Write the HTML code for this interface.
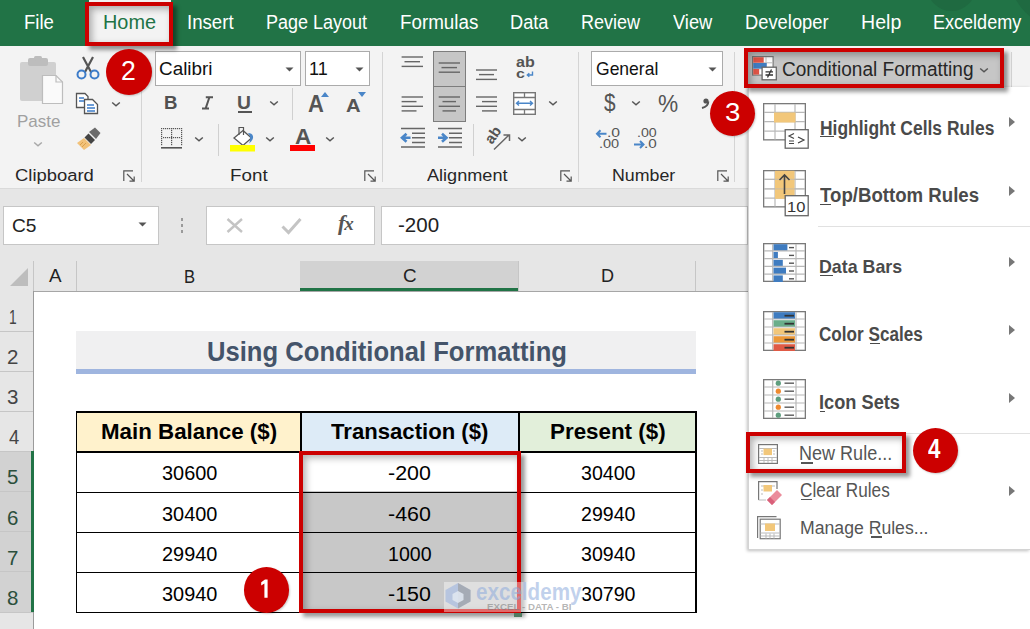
<!DOCTYPE html>
<html><head><meta charset="utf-8"><style>
html,body{margin:0;padding:0;}
body{width:1030px;height:629px;position:relative;overflow:hidden;font-family:"Liberation Sans",sans-serif;background:#fff;}
.t{position:absolute;white-space:nowrap;transform-origin:0 0;}
.r{position:absolute;}
</style></head><body>
<div class="r" style="left:0px;top:0px;width:1030px;height:46px;background:#217346"></div>
<div class="r" style="left:926.5px;top:-38px;width:49px;height:49px;border-radius:50%;background:#1f6a41"></div>
<div class="r" style="left:1008px;top:-90px;width:120px;height:120px;border-radius:50%;background:#1f6a41"></div>
<div class="r" style="left:0px;top:46px;width:1030px;height:143px;background:#f3f3f3"></div>
<div class="r" style="left:0px;top:188px;width:1030px;height:1px;background:#dadada"></div>
<div class="r" style="left:0px;top:189px;width:1030px;height:72px;background:#e6e6e6"></div>
<div class="r" style="left:0px;top:261px;width:1030px;height:30px;background:#e6e6e6"></div>
<div class="r" style="left:0px;top:291px;width:1030px;height:338px;background:#fff"></div>
<div class="t" style="left:24.14px;top:12.30px;font-size:20.00px;line-height:20.00px;font-weight:normal;color:#fff;transform:scaleX(0.9276);">File</div>
<div class="t" style="left:186.94px;top:12.30px;font-size:20.00px;line-height:20.00px;font-weight:normal;color:#fff;transform:scaleX(0.9319);">Insert</div>
<div class="t" style="left:266.20px;top:12.30px;font-size:20.00px;line-height:20.00px;font-weight:normal;color:#fff;transform:scaleX(0.9000);">Page Layout</div>
<div class="t" style="left:399.82px;top:12.30px;font-size:20.00px;line-height:20.00px;font-weight:normal;color:#fff;transform:scaleX(0.9400);">Formulas</div>
<div class="t" style="left:509.68px;top:12.30px;font-size:20.00px;line-height:20.00px;font-weight:normal;color:#fff;transform:scaleX(0.9100);">Data</div>
<div class="t" style="left:580.70px;top:12.30px;font-size:20.00px;line-height:20.00px;font-weight:normal;color:#fff;transform:scaleX(0.9000);">Review</div>
<div class="t" style="left:672.70px;top:12.30px;font-size:20.00px;line-height:20.00px;font-weight:normal;color:#fff;transform:scaleX(0.9140);">View</div>
<div class="t" style="left:744.57px;top:12.30px;font-size:20.00px;line-height:20.00px;font-weight:normal;color:#fff;transform:scaleX(0.9169);">Developer</div>
<div class="t" style="left:860.84px;top:12.30px;font-size:20.00px;line-height:20.00px;font-weight:normal;color:#fff;transform:scaleX(0.9789);">Help</div>
<div class="t" style="left:933.40px;top:12.30px;font-size:20.00px;line-height:20.00px;font-weight:normal;color:#fff;transform:scaleX(0.9021);">Exceldemy</div>
<div class="r" style="left:89px;top:0px;width:82px;height:46px;background:#f3f3f3"></div>
<div class="t" style="left:102.81px;top:12.30px;font-size:20.00px;line-height:20.00px;font-weight:normal;color:#217346;transform:scaleX(0.9940);">Home</div>
<div class="t" style="left:15.42px;top:167.46px;font-size:17.10px;line-height:17.10px;font-weight:normal;color:#262626;transform:scaleX(1.0775);">Clipboard</div>
<div class="t" style="left:229.60px;top:167.46px;font-size:17.10px;line-height:17.10px;font-weight:normal;color:#262626;transform:scaleX(1.1000);">Font</div>
<div class="t" style="left:426.50px;top:167.46px;font-size:17.10px;line-height:17.10px;font-weight:normal;color:#262626;transform:scaleX(1.0592);">Alignment</div>
<div class="t" style="left:611.56px;top:167.46px;font-size:17.10px;line-height:17.10px;font-weight:normal;color:#262626;transform:scaleX(1.0407);">Number</div>
<div class="r" style="left:141px;top:52px;width:1px;height:130px;background:#d4d4d4"></div>
<div class="r" style="left:382px;top:52px;width:1px;height:130px;background:#d4d4d4"></div>
<div class="r" style="left:578.3px;top:52px;width:1px;height:130px;background:#d4d4d4"></div>
<div class="r" style="left:734.3px;top:52px;width:1px;height:130px;background:#d4d4d4"></div>
<svg class="r" style="left:123px;top:170px;" width="13" height="12" viewBox="0 0 13 12"><path d="M0.8 11V0.8H10" fill="none" stroke="#555" stroke-width="1.2"/><path d="M4 4L11 11M6.5 11.2H11.2V6.5" fill="none" stroke="#555" stroke-width="1.2"/></svg>
<svg class="r" style="left:364px;top:170px;" width="13" height="12" viewBox="0 0 13 12"><path d="M0.8 11V0.8H10" fill="none" stroke="#555" stroke-width="1.2"/><path d="M4 4L11 11M6.5 11.2H11.2V6.5" fill="none" stroke="#555" stroke-width="1.2"/></svg>
<svg class="r" style="left:560px;top:170px;" width="13" height="12" viewBox="0 0 13 12"><path d="M0.8 11V0.8H10" fill="none" stroke="#555" stroke-width="1.2"/><path d="M4 4L11 11M6.5 11.2H11.2V6.5" fill="none" stroke="#555" stroke-width="1.2"/></svg>
<svg class="r" style="left:717px;top:170px;" width="13" height="12" viewBox="0 0 13 12"><path d="M0.8 11V0.8H10" fill="none" stroke="#555" stroke-width="1.2"/><path d="M4 4L11 11M6.5 11.2H11.2V6.5" fill="none" stroke="#555" stroke-width="1.2"/></svg>
<svg class="r" style="left:18px;top:56px;" width="48" height="50" viewBox="0 0 48 50"><rect x="2" y="6" width="36" height="39" rx="2" fill="#d0d0d0"/><rect x="10" y="2" width="20" height="8" rx="2" fill="#bdbdbd"/><rect x="16" y="0" width="8" height="5" rx="1.5" fill="#bdbdbd"/><path d="M24.5 19.5H38L44.5 26V47.5H24.5Z" fill="#fafafa" stroke="#bdbdbd" stroke-width="1.2"/><path d="M38 19.5V26H44.5" fill="none" stroke="#bdbdbd" stroke-width="1.2"/></svg>
<div class="t" style="left:16.82px;top:113.02px;font-size:17.39px;line-height:17.39px;font-weight:normal;color:#a0a0a0;transform:scaleX(0.9767);">Paste</div>
<svg class="r" style="left:33px;top:141px;" width="10" height="6" viewBox="0 0 10 6"><path d="M1.2 1.5L5 4.7L8.8 1.5" fill="none" stroke="#a8a8a8" stroke-width="1.5"/></svg>
<svg class="r" style="left:75px;top:55px;" width="26" height="25" viewBox="0 0 26 25"><path d="M8 2L16 17M18 2L10 17" stroke="#555" stroke-width="2.2" fill="none"/><circle cx="6.5" cy="19.5" r="4" fill="none" stroke="#3d7cc9" stroke-width="2"/><circle cx="19.5" cy="19.5" r="4" fill="none" stroke="#3d7cc9" stroke-width="2"/></svg>
<svg class="r" style="left:75px;top:92px;" width="26" height="23" viewBox="0 0 26 23"><path d="M1.5 1.5H10L13 4.5V15.5H1.5Z" fill="#fff" stroke="#555" stroke-width="1.3"/><path d="M9.5 7.5H17.5L22.5 12.5V21.5H9.5Z" fill="#fff" stroke="#555" stroke-width="1.3"/><path d="M4 6H9M4 9H9M12 13H19M12 16H20M12 19H20" stroke="#3d7cc9" stroke-width="1.3"/></svg>
<svg class="r" style="left:111px;top:101px;" width="10" height="6" viewBox="0 0 10 6"><path d="M1.2 1.5L5 4.7L8.8 1.5" fill="none" stroke="#555" stroke-width="1.5"/></svg>
<svg class="r" style="left:76px;top:127px;" width="26" height="23" viewBox="0 0 26 23"><path d="M13 5L19 0.5L24.5 6L20 12Z" fill="#6b6b6b"/><path d="M12.5 6.5L19 13L15 17L8.5 10.5Z" fill="#444"/><path d="M8 11L15 18L8 23L1 16Z" fill="#f2c27a"/><path d="M4 18L7 15M6 20L10 16" stroke="#d9a14e" stroke-width="1"/></svg>
<div class="r" style="left:155px;top:51.3px;width:146px;height:34.5px;background:#fff;border:1px solid #ababab;box-sizing:border-box"></div>
<div class="r" style="left:305px;top:51.3px;width:65px;height:34.5px;background:#fff;border:1px solid #ababab;box-sizing:border-box"></div>
<div class="t" style="left:158.81px;top:59.34px;font-size:19.13px;line-height:19.13px;font-weight:normal;color:#111;transform:scaleX(0.9885);">Calibri</div>
<div class="t" style="left:309.06px;top:59.34px;font-size:19.13px;line-height:19.13px;font-weight:normal;color:#111;transform:scaleX(0.9444);">11</div>
<svg class="r" style="left:285px;top:67px;" width="9" height="5" viewBox="0 0 9 5"><path d="M0.5 0.5H8.5L4.5 4.5Z" fill="#555"/></svg>
<svg class="r" style="left:355px;top:67px;" width="9" height="5" viewBox="0 0 9 5"><path d="M0.5 0.5H8.5L4.5 4.5Z" fill="#555"/></svg>
<div class="t" style="left:163.63px;top:93.32px;font-size:19.28px;line-height:19.28px;font-weight:bold;color:#505050;transform:scaleX(0.9667);">B</div>
<svg class="r" style="left:201px;top:96px;" width="13" height="14" viewBox="0 0 13 14"><path d="M4.8 1.2H12M1 12.6H8M8.4 1.2L4.6 12.6" stroke="#555" stroke-width="2" fill="none"/></svg>
<div class="t" style="left:237.00px;top:93.32px;font-size:19.28px;line-height:19.28px;font-weight:bold;color:#555;">U</div>
<div class="r" style="left:237.6px;top:111.2px;width:14px;height:1.8px;background:#555"></div>
<svg class="r" style="left:269px;top:100px;" width="10" height="6" viewBox="0 0 10 6"><path d="M1.2 1.5L5 4.7L8.8 1.5" fill="none" stroke="#555" stroke-width="1.5"/></svg>
<div class="r" style="left:292px;top:88px;width:1px;height:32px;background:#d0d0d0"></div>
<div class="t" style="left:308.15px;top:93.01px;font-size:23.04px;line-height:23.04px;font-weight:bold;color:#555;transform:scaleX(0.9533);">A</div>
<svg class="r" style="left:321px;top:92px;" width="8" height="5" viewBox="0 0 8 5"><path d="M0 5H8L4 0Z" fill="#4a86c8"/></svg>
<div class="t" style="left:346.19px;top:97.08px;font-size:18.26px;line-height:18.26px;font-weight:bold;color:#555;transform:scaleX(1.1091);">A</div>
<svg class="r" style="left:358px;top:92px;" width="8" height="5" viewBox="0 0 8 5"><path d="M0 0H8L4 5Z" fill="#4a86c8"/></svg>
<svg class="r" style="left:160.5px;top:128px;" width="22" height="21" viewBox="0 0 22 21"><rect x="0" y="0" width="1.2" height="1.2" fill="#555"/><rect x="10" y="0" width="1.2" height="1.2" fill="#555"/><rect x="20" y="0" width="1.2" height="1.2" fill="#555"/><rect x="0" y="2" width="1.2" height="1.2" fill="#555"/><rect x="10" y="2" width="1.2" height="1.2" fill="#555"/><rect x="20" y="2" width="1.2" height="1.2" fill="#555"/><rect x="0" y="4" width="1.2" height="1.2" fill="#555"/><rect x="10" y="4" width="1.2" height="1.2" fill="#555"/><rect x="20" y="4" width="1.2" height="1.2" fill="#555"/><rect x="0" y="6" width="1.2" height="1.2" fill="#555"/><rect x="10" y="6" width="1.2" height="1.2" fill="#555"/><rect x="20" y="6" width="1.2" height="1.2" fill="#555"/><rect x="0" y="8" width="1.2" height="1.2" fill="#555"/><rect x="10" y="8" width="1.2" height="1.2" fill="#555"/><rect x="20" y="8" width="1.2" height="1.2" fill="#555"/><rect x="0" y="10" width="1.2" height="1.2" fill="#555"/><rect x="10" y="10" width="1.2" height="1.2" fill="#555"/><rect x="20" y="10" width="1.2" height="1.2" fill="#555"/><rect x="0" y="12" width="1.2" height="1.2" fill="#555"/><rect x="10" y="12" width="1.2" height="1.2" fill="#555"/><rect x="20" y="12" width="1.2" height="1.2" fill="#555"/><rect x="0" y="14" width="1.2" height="1.2" fill="#555"/><rect x="10" y="14" width="1.2" height="1.2" fill="#555"/><rect x="20" y="14" width="1.2" height="1.2" fill="#555"/><rect x="0" y="16" width="1.2" height="1.2" fill="#555"/><rect x="10" y="16" width="1.2" height="1.2" fill="#555"/><rect x="20" y="16" width="1.2" height="1.2" fill="#555"/><rect x="2" y="0" width="1.2" height="1.2" fill="#555"/><rect x="2" y="9" width="1.2" height="1.2" fill="#555"/><rect x="4" y="0" width="1.2" height="1.2" fill="#555"/><rect x="4" y="9" width="1.2" height="1.2" fill="#555"/><rect x="6" y="0" width="1.2" height="1.2" fill="#555"/><rect x="6" y="9" width="1.2" height="1.2" fill="#555"/><rect x="8" y="0" width="1.2" height="1.2" fill="#555"/><rect x="8" y="9" width="1.2" height="1.2" fill="#555"/><rect x="10" y="0" width="1.2" height="1.2" fill="#555"/><rect x="10" y="9" width="1.2" height="1.2" fill="#555"/><rect x="12" y="0" width="1.2" height="1.2" fill="#555"/><rect x="12" y="9" width="1.2" height="1.2" fill="#555"/><rect x="14" y="0" width="1.2" height="1.2" fill="#555"/><rect x="14" y="9" width="1.2" height="1.2" fill="#555"/><rect x="16" y="0" width="1.2" height="1.2" fill="#555"/><rect x="16" y="9" width="1.2" height="1.2" fill="#555"/><rect x="18" y="0" width="1.2" height="1.2" fill="#555"/><rect x="18" y="9" width="1.2" height="1.2" fill="#555"/><rect x="0" y="19" width="21" height="1.6" fill="#555"/></svg>
<svg class="r" style="left:194px;top:136px;" width="10" height="6" viewBox="0 0 10 6"><path d="M1.2 1.5L5 4.7L8.8 1.5" fill="none" stroke="#555" stroke-width="1.5"/></svg>
<div class="r" style="left:218px;top:124px;width:1px;height:32px;background:#d0d0d0"></div>
<svg class="r" style="left:229px;top:126px;" width="28" height="26" viewBox="0 0 28 26"><path d="M14 4.5L22.5 12L14 19.5L5 12Z" fill="#fff" stroke="#555" stroke-width="1.3"/><path d="M10 9V1.5H14.5V9" fill="none" stroke="#555" stroke-width="1.2"/><path d="M19 7C24 7 27 12 20 17.5C22 13 21.5 10 19 7Z" fill="#4a86c8"/><rect x="1" y="19" width="25" height="6.5" fill="#ffff00"/></svg>
<svg class="r" style="left:265px;top:136px;" width="10" height="6" viewBox="0 0 10 6"><path d="M1.2 1.5L5 4.7L8.8 1.5" fill="none" stroke="#555" stroke-width="1.5"/></svg>
<div class="t" style="left:295.00px;top:125.91px;font-size:22.46px;line-height:22.46px;font-weight:bold;color:#555;">A</div>
<div class="r" style="left:290px;top:145px;width:25px;height:6px;background:#ff0000"></div>
<svg class="r" style="left:325px;top:136px;" width="10" height="6" viewBox="0 0 10 6"><path d="M1.2 1.5L5 4.7L8.8 1.5" fill="none" stroke="#555" stroke-width="1.5"/></svg>
<div class="r" style="left:432.6px;top:51.3px;width:33.6px;height:35.5px;background:#c6c6c6;border:1.4px solid #7d7d7d;box-sizing:border-box"></div>
<div class="r" style="left:432.6px;top:85.8px;width:33.6px;height:36px;background:#c6c6c6;border:1.4px solid #7d7d7d;box-sizing:border-box"></div>
<svg class="r" style="left:400px;top:55.6px;" width="40" height="13" viewBox="0 0 40 13"><rect x="1.60" y="0.30" width="21.40" height="1.4" fill="#666"/><rect x="4.50" y="5.00" width="15.50" height="1.4" fill="#666"/><rect x="1.60" y="9.70" width="21.40" height="1.4" fill="#666"/></svg>
<svg class="r" style="left:437px;top:61.6px;" width="40" height="13" viewBox="0 0 40 13"><rect x="1.70" y="0.30" width="21.30" height="1.4" fill="#666"/><rect x="4.50" y="4.90" width="15.50" height="1.4" fill="#666"/><rect x="1.70" y="9.50" width="21.30" height="1.4" fill="#666"/></svg>
<svg class="r" style="left:475px;top:69.4px;" width="40" height="13" viewBox="0 0 40 13"><rect x="1.00" y="0.30" width="21.00" height="1.4" fill="#666"/><rect x="4.00" y="4.90" width="15.00" height="1.4" fill="#666"/><rect x="1.00" y="9.70" width="21.00" height="1.4" fill="#666"/></svg>
<svg class="r" style="left:400px;top:95.7px;" width="40" height="17" viewBox="0 0 40 17"><rect x="1.60" y="0.30" width="21.40" height="1.4" fill="#666"/><rect x="1.60" y="4.90" width="14.90" height="1.4" fill="#666"/><rect x="1.60" y="9.60" width="21.40" height="1.4" fill="#666"/><rect x="1.60" y="14.20" width="14.90" height="1.4" fill="#666"/></svg>
<svg class="r" style="left:437px;top:95.7px;" width="40" height="17" viewBox="0 0 40 17"><rect x="1.70" y="0.30" width="21.30" height="1.4" fill="#666"/><rect x="5.50" y="4.90" width="13.50" height="1.4" fill="#666"/><rect x="1.70" y="9.60" width="21.30" height="1.4" fill="#666"/><rect x="5.50" y="14.20" width="13.50" height="1.4" fill="#666"/></svg>
<svg class="r" style="left:475px;top:95.7px;" width="40" height="17" viewBox="0 0 40 17"><rect x="1.00" y="0.30" width="21.00" height="1.4" fill="#666"/><rect x="7.00" y="4.90" width="15.00" height="1.4" fill="#666"/><rect x="1.00" y="9.60" width="21.00" height="1.4" fill="#666"/><rect x="7.00" y="14.20" width="15.00" height="1.4" fill="#666"/></svg>
<div class="t" style="left:515.70px;top:55.10px;font-size:14.35px;line-height:14.35px;font-weight:bold;color:#555;transform:scaleX(1.1187);">ab</div>
<div class="t" style="left:515.70px;top:67.33px;font-size:13.50px;line-height:13.50px;font-weight:bold;color:#555;transform:scaleX(1.1857);">c</div>
<svg class="r" style="left:526px;top:71px;" width="8" height="7" viewBox="0 0 8 7"><path d="M6.5 0.5V4H1.5M3.3 2.2L1.3 4L3.3 5.8" fill="none" stroke="#4a86c8" stroke-width="1.4"/></svg>
<svg class="r" style="left:513px;top:91.5px;" width="23" height="23" viewBox="0 0 23 23"><rect x="0.7" y="0.7" width="21.6" height="21.6" fill="#fff" stroke="#777" stroke-width="1.4"/><path d="M0.7 5.5H22.3M0.7 17.5H22.3M11.5 0.7V5.5M11.5 17.5V22.3" stroke="#777" stroke-width="1.3" fill="none"/><path d="M3.5 11.3H19.5M6 9L3.5 11.3L6 13.6M17 9L19.5 11.3L17 13.6" stroke="#4a86c8" stroke-width="1.4" fill="none"/></svg>
<svg class="r" style="left:548px;top:100px;" width="10" height="6" viewBox="0 0 10 6"><path d="M1.2 1.5L5 4.7L8.8 1.5" fill="none" stroke="#555" stroke-width="1.5"/></svg>
<svg class="r" style="left:400px;top:127px;" width="26" height="22" viewBox="0 0 26 22"><path d="M1 1.6H25M12 6.2H25M12 10.8H25M12 15.4H25M1 20H25" stroke="#666" stroke-width="1.5"/><path d="M10.5 10.8H3M6.5 6.8L2 10.8L6.5 14.8" stroke="#4a86c8" stroke-width="2.6" fill="none"/></svg>
<svg class="r" style="left:437px;top:127px;" width="26" height="22" viewBox="0 0 26 22"><path d="M1 1.6H25M12 6.2H25M12 10.8H25M12 15.4H25M1 20H25" stroke="#666" stroke-width="1.5"/><path d="M1 10.8H8.5M5 6.8L9.5 10.8L5 14.8" stroke="#4a86c8" stroke-width="2.6" fill="none"/></svg>
<div class="r" style="left:473px;top:124px;width:1px;height:32px;background:#d0d0d0"></div>
<div class="t" style="left:481.5px;top:125.5px;width:22px;height:18px;font:bold 15px/18px 'Liberation Sans';color:#555;transform:rotate(-55deg);transform-origin:50% 50%;text-align:center">ab</div>
<svg class="r" style="left:490px;top:131px;" width="24" height="22" viewBox="0 0 24 22"><path d="M4 18.5L19 4M13.5 4H19.5V10" stroke="#666" stroke-width="1.5" fill="none"/></svg>
<svg class="r" style="left:517px;top:136px;" width="10" height="6" viewBox="0 0 10 6"><path d="M1.2 1.5L5 4.7L8.8 1.5" fill="none" stroke="#555" stroke-width="1.5"/></svg>
<div class="r" style="left:591px;top:51px;width:132px;height:35px;background:#fff;border:1px solid #ababab;box-sizing:border-box"></div>
<div class="t" style="left:595.58px;top:59.34px;font-size:19.13px;line-height:19.13px;font-weight:normal;color:#111;transform:scaleX(0.9167);">General</div>
<svg class="r" style="left:708px;top:67px;" width="9" height="5" viewBox="0 0 9 5"><path d="M0.5 0.5H8.5L4.5 4.5Z" fill="#555"/></svg>
<div class="t" style="left:603.60px;top:91.35px;font-size:24.06px;line-height:24.06px;font-weight:normal;color:#555;transform:scaleX(0.8615);">$</div>
<svg class="r" style="left:631px;top:100px;" width="10" height="6" viewBox="0 0 10 6"><path d="M1.2 1.5L5 4.7L8.8 1.5" fill="none" stroke="#555" stroke-width="1.5"/></svg>
<div class="t" style="left:658.25px;top:92.47px;font-size:23.91px;line-height:23.91px;font-weight:normal;color:#555;transform:scaleX(0.9500);">%</div>
<svg class="r" style="left:700px;top:98px;" width="10" height="11" viewBox="0 0 10 11"><circle cx="6" cy="3" r="2.6" fill="#555"/><path d="M8.3 3.5C8.3 6.5 6 9 2 10" stroke="#555" stroke-width="2" fill="none"/></svg>
<svg class="r" style="left:595px;top:129px;" width="13" height="10" viewBox="0 0 13 10"><path d="M11.5 4.7H2M5.5 1.2L2 4.7L5.5 8.2" stroke="#4a86c8" stroke-width="2" fill="none"/></svg>
<div class="t" style="left:606.64px;top:127.01px;font-size:12.46px;line-height:12.46px;font-weight:normal;color:#555;transform:scaleX(1.2625);">.0</div>
<div class="t" style="left:599.33px;top:137.81px;font-size:12.46px;line-height:12.46px;font-weight:normal;color:#555;transform:scaleX(1.1667);">.00</div>
<div class="t" style="left:636.66px;top:127.01px;font-size:12.46px;line-height:12.46px;font-weight:normal;color:#555;transform:scaleX(1.1400);">.00</div>
<svg class="r" style="left:632.5px;top:140px;" width="13" height="10" viewBox="0 0 13 10"><path d="M1 4.5H10.5M7 1L10.5 4.5L7 8" stroke="#4a86c8" stroke-width="2" fill="none"/></svg>
<div class="t" style="left:643.88px;top:137.81px;font-size:12.46px;line-height:12.46px;font-weight:normal;color:#555;transform:scaleX(1.2250);">.0</div>
<div class="r" style="left:748px;top:52px;width:252px;height:34px;background:#c6c6c6"></div>
<div class="r" style="left:1011px;top:52px;width:1px;height:130px;background:#d4d4d4"></div>
<svg class="r" style="left:752px;top:56px;" width="26" height="25" viewBox="0 0 26 25"><rect x="0.6" y="0.6" width="20.5" height="18.5" fill="#fff" stroke="#7a7a7a" stroke-width="1.2"/><path d="M14 1V19M1 6.8H21M1 12.8H21" stroke="#bbb" stroke-width="1"/><rect x="1.2" y="1.2" width="10.5" height="5.5" fill="#e05547"/><rect x="1.2" y="7" width="13.5" height="5.6" fill="#3f7cc0"/><rect x="1.2" y="13" width="6" height="5.6" fill="#e05547"/><rect x="10.1" y="11.2" width="14.2" height="12.6" fill="#fff" stroke="#666" stroke-width="1.3"/><path d="M13.5 15.8H21M13.5 19H21M19.5 13.5L15.5 21.5" stroke="#333" stroke-width="1.3" fill="none"/></svg>
<div class="t" style="left:781.65px;top:59.00px;font-size:20.00px;line-height:20.00px;font-weight:normal;color:#262626;transform:scaleX(0.9518);">Conditional Formatting</div>
<svg class="r" style="left:979px;top:67px;" width="10" height="6" viewBox="0 0 10 6"><path d="M1.2 1.5L5 4.7L8.8 1.5" fill="none" stroke="#555" stroke-width="1.5"/></svg>
<div class="r" style="left:3px;top:206px;width:156px;height:39px;background:#fff;border:1px solid #c6c6c6;box-sizing:border-box"></div>
<div class="t" style="left:11.95px;top:217.48px;font-size:18.26px;line-height:18.26px;font-weight:normal;color:#222;transform:scaleX(1.0476);">C5</div>
<svg class="r" style="left:138px;top:222px;" width="9" height="5" viewBox="0 0 9 5"><path d="M0.5 0.5H8.5L4.5 4.5Z" fill="#555"/></svg>
<div class="r" style="left:181px;top:218px;width:2px;height:3px;background:#9a9a9a"></div>
<div class="r" style="left:181px;top:224px;width:2px;height:3px;background:#9a9a9a"></div>
<div class="r" style="left:181px;top:230px;width:2px;height:3px;background:#9a9a9a"></div>
<div class="r" style="left:206px;top:206px;width:169px;height:39px;background:#fff;border:1px solid #c6c6c6;box-sizing:border-box"></div>
<svg class="r" style="left:226px;top:218px;" width="18" height="15" viewBox="0 0 18 15"><path d="M1.5 1L16 14M16 1L1.5 14" stroke="#c4c4c4" stroke-width="2.4"/></svg>
<svg class="r" style="left:281px;top:217px;" width="21" height="18" viewBox="0 0 21 18"><path d="M1.5 9.5L7.5 15.5L19.5 2" stroke="#c4c4c4" stroke-width="3" fill="none"/></svg>
<div class="t" style="left:338px;top:212px;font:italic bold 22px/22px 'Liberation Serif';color:#555;letter-spacing:-1px">f<span style="font-size:19px">x</span></div>
<div class="r" style="left:381px;top:206px;width:367px;height:39px;background:#fff;border:1px solid #c6c6c6;box-sizing:border-box"></div>
<div class="t" style="left:397.95px;top:216.37px;font-size:19.57px;line-height:19.57px;font-weight:normal;color:#222;transform:scaleX(1.0486);">-200</div>
<div class="r" style="left:0px;top:261px;width:748px;height:30px;background:#e6e6e6"></div>
<div class="r" style="left:33px;top:261px;width:1px;height:30px;background:#c6c6c6"></div>
<div class="r" style="left:76px;top:261px;width:1px;height:30px;background:#c6c6c6"></div>
<div class="r" style="left:300px;top:261px;width:219px;height:30px;background:#d2d2d2"></div>
<div class="r" style="left:300px;top:288px;width:219px;height:3px;background:#217346"></div>
<div class="r" style="left:518px;top:261px;width:1px;height:30px;background:#c6c6c6"></div>
<div class="r" style="left:695px;top:261px;width:1px;height:30px;background:#c6c6c6"></div>
<div class="r" style="left:0px;top:290.5px;width:748px;height:1.5px;background:#a6a6a6"></div>
<svg class="r" style="left:10px;top:268px;" width="18" height="18" viewBox="0 0 18 18"><path d="M18 0V18H0Z" fill="#bdbdbd"/></svg>
<div class="t" style="left:49.00px;top:266.99px;font-size:18.84px;line-height:18.84px;font-weight:normal;color:#222;">A</div>
<div class="t" style="left:183.54px;top:266.62px;font-size:19.28px;line-height:19.28px;font-weight:normal;color:#222;transform:scaleX(0.8636);">B</div>
<div class="t" style="left:403.00px;top:266.99px;font-size:18.84px;line-height:18.84px;font-weight:normal;color:#222;">C</div>
<div class="t" style="left:600.54px;top:266.99px;font-size:18.84px;line-height:18.84px;font-weight:normal;color:#222;transform:scaleX(0.9583);">D</div>
<div class="r" style="left:0px;top:291px;width:33px;height:338px;background:#e6e6e6"></div>
<div class="r" style="left:0px;top:451px;width:33px;height:161px;background:#d2d2d2"></div>
<div class="r" style="left:33px;top:291px;width:1px;height:338px;background:#9b9b9b"></div>
<div class="r" style="left:0px;top:331px;width:33px;height:1px;background:#c6c6c6"></div>
<div class="r" style="left:0px;top:371px;width:33px;height:1px;background:#c6c6c6"></div>
<div class="r" style="left:0px;top:411px;width:33px;height:1px;background:#c6c6c6"></div>
<div class="r" style="left:0px;top:451px;width:33px;height:1px;background:#c6c6c6"></div>
<div class="r" style="left:0px;top:491px;width:33px;height:1px;background:#c6c6c6"></div>
<div class="r" style="left:0px;top:531px;width:33px;height:1px;background:#c6c6c6"></div>
<div class="r" style="left:0px;top:571px;width:33px;height:1px;background:#c6c6c6"></div>
<div class="r" style="left:0px;top:612px;width:33px;height:1px;background:#c6c6c6"></div>
<div class="r" style="left:31px;top:451px;width:2.5px;height:161px;background:#217346"></div>
<div class="t" style="left:8.59px;top:307.89px;font-size:19.42px;line-height:19.42px;font-weight:normal;color:#444;transform:scaleX(0.7111);">1</div>
<div class="t" style="left:7.44px;top:347.89px;font-size:19.42px;line-height:19.42px;font-weight:normal;color:#444;transform:scaleX(1.0556);">2</div>
<div class="t" style="left:7.44px;top:388.09px;font-size:19.42px;line-height:19.42px;font-weight:normal;color:#444;transform:scaleX(1.0556);">3</div>
<div class="t" style="left:8.50px;top:428.39px;font-size:19.42px;line-height:19.42px;font-weight:normal;color:#444;transform:scaleX(0.9500);">4</div>
<div class="t" style="left:7.44px;top:468.39px;font-size:19.42px;line-height:19.42px;font-weight:normal;color:#2b4f3c;transform:scaleX(1.0556);">5</div>
<div class="t" style="left:7.44px;top:508.69px;font-size:19.42px;line-height:19.42px;font-weight:normal;color:#2b4f3c;transform:scaleX(1.0556);">6</div>
<div class="t" style="left:7.44px;top:548.89px;font-size:19.42px;line-height:19.42px;font-weight:normal;color:#2b4f3c;transform:scaleX(1.0556);">7</div>
<div class="t" style="left:7.44px;top:589.09px;font-size:19.42px;line-height:19.42px;font-weight:normal;color:#2b4f3c;transform:scaleX(1.0556);">8</div>
<div class="r" style="left:76px;top:331px;width:620px;height:39px;background:#f0f0f1"></div>
<div class="r" style="left:76px;top:369px;width:620px;height:5px;background:#9fb5df"></div>
<div class="t" style="left:206.96px;top:338.35px;font-size:27.83px;line-height:27.83px;font-weight:bold;color:#44546a;transform:scaleX(0.9204);">Using Conditional Formatting</div>
<div class="r" style="left:76px;top:411px;width:225px;height:41px;background:#fff2cc"></div>
<div class="r" style="left:300px;top:411px;width:219px;height:41px;background:#ddebf7"></div>
<div class="r" style="left:518px;top:411px;width:178px;height:41px;background:#e2efda"></div>
<div class="r" style="left:300px;top:491px;width:219px;height:122px;background:#c8c8c8"></div>
<div class="r" style="left:75.8px;top:411.2px;width:620.7px;height:1.6px;background:#000"></div>
<div class="r" style="left:75.8px;top:451.2px;width:620.7px;height:1.6px;background:#000"></div>
<div class="r" style="left:75.8px;top:491.5px;width:620.7px;height:1.6px;background:#000"></div>
<div class="r" style="left:75.8px;top:531.6px;width:620.7px;height:1.6px;background:#000"></div>
<div class="r" style="left:75.8px;top:571.9px;width:620.7px;height:1.6px;background:#000"></div>
<div class="r" style="left:75.8px;top:611.7px;width:620.7px;height:1.6px;background:#000"></div>
<div class="r" style="left:75.8px;top:411.2px;width:1.6px;height:202.1px;background:#000"></div>
<div class="r" style="left:300px;top:411.2px;width:1.6px;height:202.1px;background:#000"></div>
<div class="r" style="left:518px;top:411.2px;width:1.6px;height:202.1px;background:#000"></div>
<div class="r" style="left:695px;top:411.2px;width:1.6px;height:202.1px;background:#000"></div>
<div class="t" style="left:100.85px;top:421.59px;font-size:21.30px;line-height:21.30px;font-weight:bold;color:#000;transform:scaleX(1.0482);">Main Balance ($)</div>
<div class="t" style="left:331.00px;top:421.28px;font-size:22.03px;line-height:22.03px;font-weight:bold;color:#000;transform:scaleX(1.0052);">Transaction ($)</div>
<div class="t" style="left:549.88px;top:421.28px;font-size:22.03px;line-height:22.03px;font-weight:bold;color:#000;transform:scaleX(1.0162);">Present ($)</div>
<div class="t" style="left:162.02px;top:463.35px;font-size:20.29px;line-height:20.29px;font-weight:normal;color:#000;transform:scaleX(0.9815);">30600</div>
<div class="t" style="left:388.14px;top:463.35px;font-size:20.29px;line-height:20.29px;font-weight:normal;color:#000;transform:scaleX(1.0553);">-200</div>
<div class="t" style="left:581.04px;top:463.35px;font-size:20.29px;line-height:20.29px;font-weight:normal;color:#000;transform:scaleX(0.9648);">30400</div>
<div class="t" style="left:162.02px;top:503.55px;font-size:20.29px;line-height:20.29px;font-weight:normal;color:#000;transform:scaleX(0.9815);">30400</div>
<div class="t" style="left:388.14px;top:503.55px;font-size:20.29px;line-height:20.29px;font-weight:normal;color:#000;transform:scaleX(1.0553);">-460</div>
<div class="t" style="left:581.04px;top:503.55px;font-size:20.29px;line-height:20.29px;font-weight:normal;color:#000;transform:scaleX(0.9648);">29940</div>
<div class="t" style="left:162.02px;top:543.75px;font-size:20.29px;line-height:20.29px;font-weight:normal;color:#000;transform:scaleX(0.9815);">29940</div>
<div class="t" style="left:387.53px;top:543.75px;font-size:20.29px;line-height:20.29px;font-weight:normal;color:#000;transform:scaleX(0.9651);">1000</div>
<div class="t" style="left:581.04px;top:543.75px;font-size:20.29px;line-height:20.29px;font-weight:normal;color:#000;transform:scaleX(0.9648);">30940</div>
<div class="t" style="left:162.02px;top:583.95px;font-size:20.29px;line-height:20.29px;font-weight:normal;color:#000;transform:scaleX(0.9815);">30940</div>
<div class="t" style="left:388.14px;top:583.95px;font-size:20.29px;line-height:20.29px;font-weight:normal;color:#000;transform:scaleX(1.0553);">-150</div>
<div class="t" style="left:581.04px;top:583.95px;font-size:20.29px;line-height:20.29px;font-weight:normal;color:#000;transform:scaleX(0.9648);">30790</div>
<div class="r" style="left:748px;top:87px;width:282px;height:463px;background:#fff;box-shadow:-1px 1px 3px rgba(0,0,0,0.25);border-left:1px solid #d4d4d4;border-bottom:1px solid #d4d4d4;box-sizing:border-box"></div>
<div class="t" style="left:819.53px;top:117.60px;font-size:20.00px;line-height:20.00px;font-weight:bold;color:#4a4a4a;transform:scaleX(0.8717);">Highlight Cells Rules</div>
<div class="t" style="left:820.00px;top:184.75px;font-size:20.29px;line-height:20.29px;font-weight:bold;color:#4a4a4a;transform:scaleX(0.9186);">Top/Bottom Rules</div>
<div class="t" style="left:819.07px;top:256.74px;font-size:19.13px;line-height:19.13px;font-weight:bold;color:#4a4a4a;transform:scaleX(0.9318);">Data Bars</div>
<div class="t" style="left:819.12px;top:324.87px;font-size:19.57px;line-height:19.57px;font-weight:bold;color:#4a4a4a;transform:scaleX(0.8752);">Color Scales</div>
<div class="t" style="left:819.10px;top:392.35px;font-size:20.29px;line-height:20.29px;font-weight:bold;color:#4a4a4a;transform:scaleX(0.8977);">Icon Sets</div>
<div class="r" style="left:820px;top:136px;width:13.5px;height:1.4px;background:#4a4a4a"></div>
<div class="r" style="left:820px;top:203.5px;width:11px;height:1.4px;background:#4a4a4a"></div>
<div class="r" style="left:820px;top:274.5px;width:13px;height:1.4px;background:#4a4a4a"></div>
<div class="r" style="left:869.5px;top:343px;width:10.5px;height:1.4px;background:#4a4a4a"></div>
<div class="r" style="left:820px;top:411px;width:5px;height:1.4px;background:#4a4a4a"></div>
<div class="r" style="left:818px;top:226px;width:212px;height:1px;background:#e1e1e1"></div>
<div class="r" style="left:748px;top:433px;width:282px;height:1px;background:#e1e1e1"></div>
<svg class="r" style="left:1009px;top:117px;" width="6" height="10" viewBox="0 0 6 10"><path d="M0 0L6 5L0 10Z" fill="#777"/></svg>
<svg class="r" style="left:1009px;top:186px;" width="6" height="10" viewBox="0 0 6 10"><path d="M0 0L6 5L0 10Z" fill="#777"/></svg>
<svg class="r" style="left:1009px;top:257px;" width="6" height="10" viewBox="0 0 6 10"><path d="M0 0L6 5L0 10Z" fill="#777"/></svg>
<svg class="r" style="left:1009px;top:325px;" width="6" height="10" viewBox="0 0 6 10"><path d="M0 0L6 5L0 10Z" fill="#777"/></svg>
<svg class="r" style="left:1009px;top:393px;" width="6" height="10" viewBox="0 0 6 10"><path d="M0 0L6 5L0 10Z" fill="#777"/></svg>
<svg class="r" style="left:1009px;top:486px;" width="6" height="10" viewBox="0 0 6 10"><path d="M0 0L6 5L0 10Z" fill="#777"/></svg>
<div class="t" style="left:798.73px;top:443.43px;font-size:20.43px;line-height:20.43px;font-weight:normal;color:#555;transform:scaleX(0.8833);">New Rule...</div>
<div class="t" style="left:799.62px;top:480.89px;font-size:19.42px;line-height:19.42px;font-weight:normal;color:#555;transform:scaleX(0.8850);">Clear Rules</div>
<div class="t" style="left:799.56px;top:519.01px;font-size:18.70px;line-height:18.70px;font-weight:normal;color:#555;transform:scaleX(0.9440);">Manage Rules...</div>
<div class="r" style="left:800.5px;top:462.3px;width:12.5px;height:1.4px;background:#555"></div>
<div class="r" style="left:800.5px;top:499px;width:11px;height:1.4px;background:#555"></div>
<div class="r" style="left:871px;top:536.4px;width:10.5px;height:1.4px;background:#555"></div>
<svg class="r" style="left:763px;top:102.5px;" width="48" height="48" viewBox="0 0 48 48"><rect x="0.65" y="0.65" width="41.70" height="36.20" fill="#fff" stroke="#7a7a7a" stroke-width="1.3"/><path d="M12.00 1V36.50" stroke="#b8b8b8" stroke-width="1.2"/><path d="M32.00 1V36.50" stroke="#b8b8b8" stroke-width="1.2"/><path d="M1 9.30H42.00" stroke="#b8b8b8" stroke-width="1.2"/><path d="M1 18.70H42.00" stroke="#b8b8b8" stroke-width="1.2"/><path d="M1 28.10H42.00" stroke="#b8b8b8" stroke-width="1.2"/><rect x="11" y="9.5" width="21.5" height="10" fill="#f2c77a"/><rect x="22.2" y="26.7" width="23" height="18.5" fill="#fff" stroke="#666" stroke-width="1.3"/><path d="M31 30.5L26 33L31 35.5M26 38H31M26 40.5H31M35 34L41 37L35 40" stroke="#444" stroke-width="1.2" fill="none"/></svg>
<svg class="r" style="left:763px;top:170px;" width="48" height="48" viewBox="0 0 48 48"><rect x="0.65" y="0.65" width="41.70" height="36.20" fill="#fff" stroke="#7a7a7a" stroke-width="1.3"/><path d="M12.00 1V36.50" stroke="#b8b8b8" stroke-width="1.2"/><path d="M32.00 1V36.50" stroke="#b8b8b8" stroke-width="1.2"/><path d="M1 9.40H42.00" stroke="#b8b8b8" stroke-width="1.2"/><path d="M1 18.80H42.00" stroke="#b8b8b8" stroke-width="1.2"/><path d="M1 28.20H42.00" stroke="#b8b8b8" stroke-width="1.2"/><rect x="12" y="0.8" width="19.5" height="28" fill="#f2c77a"/><path d="M1 9.4H42M1 18.8H42" stroke="#b8b8b8" stroke-width="1.2" opacity="0.5"/><path d="M21.5 24V5M16.5 10L21.5 5L26.5 10" stroke="#444" stroke-width="1.6" fill="none"/><rect x="22.2" y="25.7" width="23" height="20" fill="#fff" stroke="#666" stroke-width="1.3"/></svg>
<div class="t" style="left:787.40px;top:198.75px;font-size:15.00px;line-height:15.00px;font-weight:normal;color:#333;transform:scaleX(1.1000);">10</div>
<svg class="r" style="left:763px;top:243px;" width="44" height="40" viewBox="0 0 44 40"><rect x="0.65" y="0.65" width="41.70" height="37.70" fill="#fff" stroke="#7a7a7a" stroke-width="1.3"/><path d="M9.70 1V38.00" stroke="#b8b8b8" stroke-width="1.2"/><path d="M33.00 1V38.00" stroke="#b8b8b8" stroke-width="1.2"/><rect x="10.50" y="1.20" width="13.90" height="6.6" fill="#3f7cc0"/><path d="M26 4.60H31" stroke="#555" stroke-width="1.4"/><rect x="10.50" y="9.00" width="4.40" height="6.6" fill="#3f7cc0"/><path d="M26 12.40H31" stroke="#555" stroke-width="1.4"/><rect x="10.50" y="16.80" width="9.30" height="6.6" fill="#3f7cc0"/><path d="M26 20.20H31" stroke="#555" stroke-width="1.4"/><rect x="10.50" y="24.60" width="12.50" height="6.6" fill="#3f7cc0"/><path d="M26 28.00H31" stroke="#555" stroke-width="1.4"/><rect x="10.50" y="32.40" width="9.30" height="6.6" fill="#3f7cc0"/><path d="M26 35.80H31" stroke="#555" stroke-width="1.4"/><path d="M1 7.80H42" stroke="#b8b8b8" stroke-width="1.2"/><path d="M1 15.60H42" stroke="#b8b8b8" stroke-width="1.2"/><path d="M1 23.40H42" stroke="#b8b8b8" stroke-width="1.2"/><path d="M1 31.20H42" stroke="#b8b8b8" stroke-width="1.2"/></svg>
<svg class="r" style="left:763px;top:310.7px;" width="44" height="41" viewBox="0 0 44 41"><rect x="0.65" y="0.65" width="41.70" height="38.70" fill="#fff" stroke="#7a7a7a" stroke-width="1.3"/><path d="M9.70 1V39.00" stroke="#b8b8b8" stroke-width="1.2"/><path d="M33.00 1V39.00" stroke="#b8b8b8" stroke-width="1.2"/><rect x="10.5" y="1.20" width="21.5" height="6.8" fill="#3f7cc0"/><path d="M21.5 4.70H31" stroke="#333" stroke-width="1.8"/><rect x="10.5" y="9.20" width="21.5" height="6.8" fill="#6aae8a"/><path d="M21.5 12.70H31" stroke="#333" stroke-width="1.8"/><rect x="10.5" y="17.20" width="21.5" height="6.8" fill="#f2c77a"/><path d="M21.5 20.70H31" stroke="#333" stroke-width="1.8"/><rect x="10.5" y="25.20" width="21.5" height="6.8" fill="#ec9838"/><path d="M21.5 28.70H31" stroke="#333" stroke-width="1.8"/><rect x="10.5" y="33.20" width="21.5" height="6.8" fill="#e05a45"/><path d="M21.5 36.70H31" stroke="#333" stroke-width="1.8"/><path d="M1 8.00H42" stroke="#b8b8b8" stroke-width="1.2"/><path d="M1 16.00H42" stroke="#b8b8b8" stroke-width="1.2"/><path d="M1 24.00H42" stroke="#b8b8b8" stroke-width="1.2"/><path d="M1 32.00H42" stroke="#b8b8b8" stroke-width="1.2"/></svg>
<svg class="r" style="left:763px;top:378.7px;" width="44" height="41" viewBox="0 0 44 41"><rect x="0.65" y="0.65" width="41.70" height="38.70" fill="#fff" stroke="#7a7a7a" stroke-width="1.3"/><path d="M9.70 1V39.00" stroke="#b8b8b8" stroke-width="1.2"/><path d="M33.00 1V39.00" stroke="#b8b8b8" stroke-width="1.2"/><circle cx="15.3" cy="4.20" r="2.6" fill="#5e9e7e"/><path d="M21.5 4.20H31" stroke="#666" stroke-width="1.5"/><circle cx="15.3" cy="12.20" r="2.6" fill="#ee8a30"/><path d="M21.5 12.20H31" stroke="#666" stroke-width="1.5"/><circle cx="15.3" cy="20.20" r="2.6" fill="#5e9e7e"/><path d="M21.5 20.20H31" stroke="#666" stroke-width="1.5"/><circle cx="15.3" cy="28.20" r="2.6" fill="#ee8a30"/><path d="M21.5 28.20H31" stroke="#666" stroke-width="1.5"/><circle cx="15.3" cy="36.20" r="2.6" fill="#5e9e7e"/><path d="M21.5 36.20H31" stroke="#666" stroke-width="1.5"/><path d="M1 8.00H42" stroke="#b8b8b8" stroke-width="1.2"/><path d="M1 16.00H42" stroke="#b8b8b8" stroke-width="1.2"/><path d="M1 24.00H42" stroke="#b8b8b8" stroke-width="1.2"/><path d="M1 32.00H42" stroke="#b8b8b8" stroke-width="1.2"/></svg>
<svg class="r" style="left:758px;top:444px;" width="20" height="20" viewBox="0 0 20 20"><rect x="0.6" y="0.6" width="18.8" height="18.8" fill="#fff" stroke="#777" stroke-width="1.2"/><path d="M1 4.5H19M1 13.5H19M1 16.5H19M6 14V19M10 14V19M14 14V19M3 7H5M15 7H17M3 10H5M15 10H17" stroke="#bbb" stroke-width="1"/><rect x="5.5" y="4.6" width="8.5" height="6.5" fill="#f2c77a"/></svg>
<svg class="r" style="left:758px;top:480.5px;" width="25" height="25" viewBox="0 0 25 25"><path d="M0.6 19V0.6H19V8" fill="none" stroke="#777" stroke-width="1.2"/><path d="M3 5H17M3 9H5M3 13H5M0.6 19H8" stroke="#bbb" stroke-width="1"/><rect x="5.5" y="4" width="8.5" height="6.5" fill="#f2c77a"/><path d="M9 19L19 9L24 14L14 24Z" fill="#e8788a" opacity="0.85"/><path d="M9 19L12 16L17 21L14 24Z" fill="#d9607a"/></svg>
<svg class="r" style="left:756.5px;top:516.3px;" width="25" height="24" viewBox="0 0 25 24"><path d="M0.6 22V0.6H19.5" fill="none" stroke="#777" stroke-width="1.2"/><rect x="3.2" y="3.2" width="20" height="19.5" fill="#fff" stroke="#777" stroke-width="1.2"/><path d="M3.5 8H23M3.5 17H23M3.5 20H23M9 17.5V22.5M13 17.5V22.5M17 17.5V22.5" stroke="#bbb" stroke-width="1"/><rect x="8" y="7.5" width="10" height="7.5" fill="#f2c77a"/></svg>
<div class="r" style="left:85px;top:1.7px;width:88px;height:44.3px;border:4.5px solid #cc0000;box-sizing:border-box;box-shadow:4px 4px 4px rgba(0,0,0,0.4), inset 3px 3px 7px rgba(0,0,0,0.3)"></div>
<div class="r" style="left:744px;top:48px;width:260px;height:40px;border:4.5px solid #cc0000;box-sizing:border-box;box-shadow:4px 4px 4px rgba(0,0,0,0.4), inset 3px 3px 7px rgba(0,0,0,0.3)"></div>
<div class="r" style="left:746px;top:432px;width:160px;height:41px;border:4.5px solid #cc0000;box-sizing:border-box;box-shadow:4px 4px 4px rgba(0,0,0,0.4), inset 3px 3px 7px rgba(0,0,0,0.3)"></div>
<div class="r" style="left:298.6px;top:450.5px;width:222.39999999999998px;height:162.79999999999995px;border:4.5px solid #cc0000;box-sizing:border-box;box-shadow:4px 4px 4px rgba(0,0,0,0.4), inset 3px 3px 7px rgba(0,0,0,0.3)"></div>
<div class="r" style="left:444px;top:582px;width:139px;height:29.5px;background:rgba(255,255,255,0.42)"></div>
<svg class="r" style="left:444px;top:582px;" width="28" height="27" viewBox="0 0 28 27"><path d="M14 1L26.5 8V19.5L14 26.5L1.5 19.5V8Z" fill="#a9bcdf" opacity="0.75"/><path d="M14 1L26.5 8V19.5L14 26.5Z" fill="#9a9a9a" opacity="0.6"/><path d="M14 9L19.5 12V18L14 21L8.5 18V12Z" fill="#dfe5ef" opacity="0.9"/></svg>
<div class="t" style="left:475.63px;top:580.52px;font-size:23.62px;line-height:23.62px;font-weight:bold;color:rgba(140,170,220,0.55);transform:scaleX(0.8733);">exceldemy</div>
<div class="t" style="left:486.86px;top:602.98px;font-size:8.50px;line-height:8.50px;font-weight:bold;color:rgba(120,120,120,0.55);transform:scaleX(1.1444);">EXCEL - DATA - BI</div>
<div class="r" style="left:514px;top:613px;width:7.5px;height:3.5px;background:#4f7a61"></div>
<div class="r" style="left:105.9px;top:48.900000000000006px;width:46px;height:46px;border-radius:50%;background:#cc0000;box-shadow:1px 1px 2px rgba(0,0,0,0.2)"></div>
<div class="t" style="left:120.92px;top:57.24px;font-size:27.25px;line-height:27.25px;font-weight:normal;color:#fff;transform:scaleX(0.9769);">2</div>
<div class="r" style="left:710.0px;top:90.8px;width:45px;height:45px;border-radius:50%;background:#cc0000;box-shadow:1px 1px 2px rgba(0,0,0,0.2)"></div>
<div class="t" style="left:724.65px;top:99.48px;font-size:26.38px;line-height:26.38px;font-weight:normal;color:#fff;transform:scaleX(1.0500);">3</div>
<div class="r" style="left:912.5px;top:427.8px;width:45px;height:45px;border-radius:50%;background:#cc0000;box-shadow:1px 1px 2px rgba(0,0,0,0.2)"></div>
<div class="t" style="left:928.00px;top:436.11px;font-size:26.81px;line-height:26.81px;font-weight:bold;color:#fff;transform:scaleX(0.8333);">4</div>
<div class="r" style="left:243.55px;top:567.25px;width:45.5px;height:45.5px;border-radius:50%;background:#cc0000;box-shadow:1px 1px 2px rgba(0,0,0,0.2)"></div>
<svg class="r" style="left:259px;top:578px;" width="12" height="21" viewBox="0 0 12 21"><path d="M6 1.6H8.6V19.7H5.4V5.6L2.2 7.4V4.2Z" fill="#fff"/></svg></body></html>
